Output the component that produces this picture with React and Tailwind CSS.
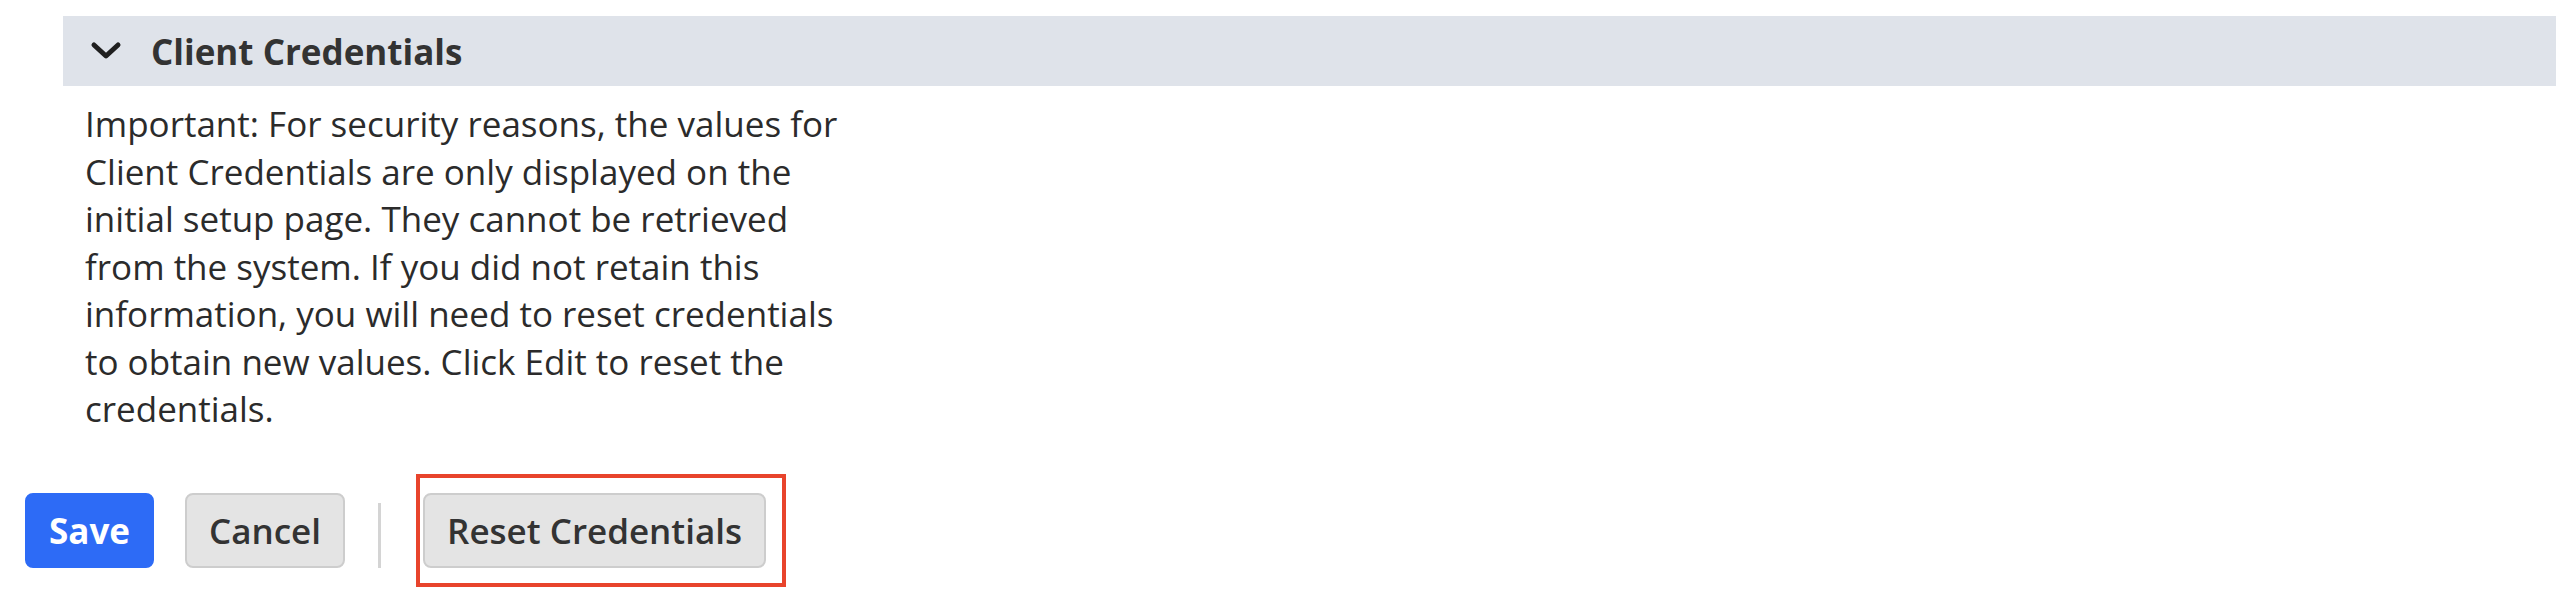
import React from 'react';

const ChevronDown = () => (
  <svg width="32" height="20" viewBox="0 0 32 20" className="shrink-0">
    <polyline points="4,4 16,15 28,4" fill="none" stroke="#1f1f1f" strokeWidth="5" strokeLinecap="round" strokeLinejoin="round" />
  </svg>
);

const Button = ({ children, primary }) => (
  <button
    className={
      primary
        ? 'h-[75px] px-[22px] rounded-[8px] border-2 border-[#2d6bf6] bg-[#2d6bf6] text-white font-bold text-[35px] leading-none'
        : 'h-[75px] px-[22px] rounded-[8px] border-2 border-[#cdcdcd] bg-[#e4e4e4] text-[#333333] font-semibold text-[35px] leading-none'
    }
  >
    {children}
  </button>
);

export default function App() {
  return (
    <div className="w-[2560px] h-[615px] bg-white font-['Open_Sans',sans-serif] pt-[16px]">
      <div className="ml-[63px] mr-[4px] h-[70px] bg-[#dfe3ea] flex items-center pl-[27px] gap-[29px]">
        <ChevronDown />
        <h2 className="text-[35px] font-bold text-[#333333] pt-[3px]">Client Credentials</h2>
      </div>

      <p className="ml-[85px] mt-[14px] w-[775px] text-[35px] leading-[47.5px] text-[#2b2b2b]">
        Important: For security reasons, the values for Client Credentials are only displayed on the
        initial setup page. They cannot be retrieved from the system. If you did not retain this
        information, you will need to reset credentials to obtain new values. Click Edit to reset the
        credentials.
      </p>

      <div className="mt-[60px] ml-[25px] flex items-center">
        <Button primary>Save</Button>
        <div className="ml-[31px]">
          <Button>Cancel</Button>
        </div>
        <div className="ml-[33px] w-[3px] h-[65px] self-end bg-[#d4d4d4]" />
        <div className="relative ml-[42px]">
          <Button>Reset Credentials</Button>
          <div className="absolute left-[-7px] top-[-19px] w-[370px] h-[113px] border-4 border-[#e8442c] pointer-events-none" />
        </div>
      </div>
    </div>
  );
}
